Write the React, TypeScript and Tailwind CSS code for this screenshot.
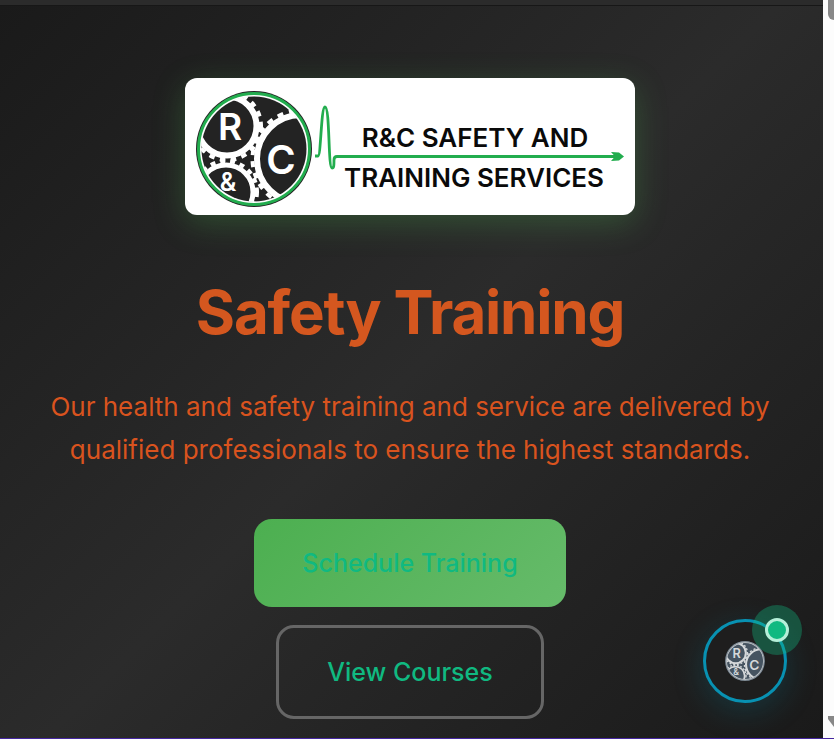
type EmblemProps = { disc: string; ring: string; rim: string; className?: string };

function Emblem({ disc, ring, rim, className }: EmblemProps) {
  const clip = `emblem-${disc.slice(1)}`;
  return (
    <svg viewBox="0 0 116 116" className={className} aria-hidden="true">
      <defs>
        <clipPath id={clip}>
          <circle cx="58" cy="58" r="53" />
        </clipPath>
      </defs>
      <circle cx="58" cy="58" r="58" fill={disc} />
      <circle cx="58" cy="58" r="55.500" fill={ring} stroke={rim} strokeWidth="3" />
      <circle cx="58" cy="58" r="52.500" fill={disc} />
      <g clipPath={`url(#${clip})`} fill="none" stroke={ring}>
        <circle cx="31" cy="35" r="29.500" strokeWidth="6" />
        <circle cx="31" cy="35" r="34" strokeWidth="4" strokeDasharray="5.500 5.500" />
        <circle cx="30" cy="101" r="27" strokeWidth="5" />
        <circle cx="30" cy="101" r="31" strokeWidth="4" strokeDasharray="5 5" />
        <circle cx="105" cy="68" r="44" strokeWidth="6" />
        <circle cx="105" cy="68" r="48.500" strokeWidth="4" strokeDasharray="6 6" />
      </g>
      <g fill={ring} fontFamily="Inter, sans-serif" fontWeight="600" textAnchor="middle">
        <text x="34" y="49" fontSize="37">R</text>
        <text x="85" y="83" fontSize="40">C</text>
        <text x="32" y="100" fontSize="25">&amp;</text>
      </g>
    </svg>
  );
}

function Logo() {
  return (
    <svg viewBox="0 0 450 137" className="block h-auto w-full" role="img" aria-label="R&C Safety and Training Services">
      <svg x="11" y="13" width="116" height="116">
        <Emblem disc="#232323" ring="#ffffff" rim="#22ad4e" />
      </svg>
      <path
        d="M130 78H133C136 78 136 29 140 29C145 29 143 90 147 90C149 90 149 87 149 82Q149 78.500 152 78.500H431"
        fill="none"
        stroke="#22ad4e"
        strokeWidth="2.8"
        strokeLinejoin="round"
      />
      <path d="M426 74L434 74.500L439 78.500L434 82.500L426 83L430 78.500Z" fill="#22ad4e" />
      <g fill="#0a0a0a" fontFamily="Inter, sans-serif" fontWeight="600" fontSize="26" textAnchor="middle">
        <text x="290" y="69">R&amp;C SAFETY AND</text>
        <text x="289" y="109">TRAINING SERVICES</text>
      </g>
    </svg>
  );
}

function ChatBadge() {
  return (
    <button
      type="button"
      aria-label="Open chat"
      className="absolute right-9 bottom-[35px] flex size-[84px] items-center justify-center rounded-full border-3 border-[#0891b2] bg-[#1e1e1e] shadow-[0_8px_32px_rgba(8,145,178,0.22)]"
    >
      <Emblem disc="#465461" ring="#d5d8da" rim="#8a949c" className="size-10" />
      <span className="absolute -top-[17px] -right-[18px] flex size-[50px] items-center justify-center rounded-full bg-[#10b981]/35">
        <span className="size-6 rounded-full border-3 border-[#b5efd9] bg-[#10b981]" />
      </span>
    </button>
  );
}

export default function App() {
  return (
    <div className="flex min-h-screen border-b border-[#4527a0] bg-[#fcfcfc] font-['Inter',sans-serif]">
      <div className="relative flex min-w-0 flex-1 flex-col bg-[#2a2a2a]">
        <header className="h-1.5 border-b border-[#171717] bg-[#2b2b2b]" />
        <main className="flex flex-1 flex-col items-center bg-linear-135 from-[#1a1a1a] via-[#2b2b2b] to-[#1a1a1a] pt-18 pr-[39px] pb-4 pl-9 text-center">
          <div className="w-full max-w-[450px] overflow-hidden rounded-xl bg-white shadow-[0_8px_32px_rgba(76,175,80,0.3)]">
            <Logo />
          </div>
          <h1 className="mt-16 text-[60px] leading-[66px] font-bold tracking-[-0.02em] text-[#d4571f]">Safety Training</h1>
          <p className="mt-10 max-w-[740px] text-[26px] leading-[43px] text-[#d9531e]">
            Our health and safety training and service are delivered by qualified professionals to ensure the highest standards.
          </p>
          <div className="mt-12 flex flex-col items-center gap-[18px] text-[25px] leading-8 font-medium text-[#10b981]">
            <button type="button" className="rounded-[18px] bg-linear-135 from-[#4caf50] to-[#66bb6a] px-12 py-7">
              Schedule Training
            </button>
            <button type="button" className="rounded-[18px] border-3 border-[#666666] px-12 py-7">
              View Courses
            </button>
          </div>
        </main>
        <ChatBadge />
      </div>
      <div className="flex w-[11px] flex-col items-end justify-between overflow-hidden pb-[11px]" aria-hidden="true">
        <div className="h-5 w-1.5 rounded-bl-md bg-[#888888]" />
        <svg viewBox="0 0 6 11" className="h-[11px] w-1.5" fill="#888888">
          <path d="M0 0H6V11L0 3Z" />
        </svg>
      </div>
    </div>
  );
}
